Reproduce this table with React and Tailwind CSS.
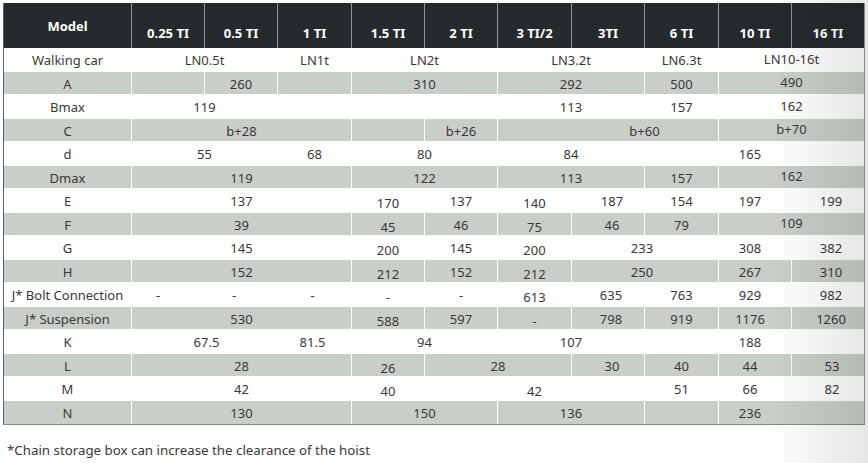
import React from "react";

const heads = ["0.25 TI", "0.5 TI", "1 TI", "1.5 TI", "2 TI", "3 TI/2", "3TI", "6 TI", "10 TI", "16 TI"];

const span = { 1: "col-span-1", 2: "col-span-2", 3: "col-span-3" };

// vertical nudges: default, lower, higher
const LO = "pt-[7px]";
const HI = "pt-0";

// [span, text, extra classes, join (no divider on the left)]
const rows = [
    { label: "Walking car", cells: [[2, "LN0.5t"], [1, "LN1t"], [2, "LN2t"], [2, "LN3.2t"], [1, "LN6.3t"], [2, "LN10-16t", HI]] },
    { label: "A", cells: [[1, ""], [1, "260"], [1, ""], [2, "310"], [2, "292"], [1, "500"], [2, "490", HI]] },
    { label: "Bmax", cells: [[2, "119"], [3, ""], [2, "113"], [1, "157"], [2, "162", HI]] },
    { label: "C", cells: [[3, "b+28"], [1, ""], [1, "b+26"], [1, ""], [2, "b+60", "", true], [2, "b+70", HI]] },
    { label: "d", cells: [[2, "55"], [1, "68"], [2, "80"], [2, "84"], [1, ""], [1, "165", "pr-[10px]"], [1, ""]] },
    { label: "Dmax", cells: [[3, "119"], [2, "122"], [2, "113"], [1, "157"], [2, "162", HI]] },
    { label: "E", cells: [[3, "137"], [1, "170", LO], [1, "137"], [1, "140", LO], [1, "187", "pl-[8px]"], [1, "154"], [1, "197", "pr-[10px]"], [1, "199", "pl-[6px]"]] },
    { label: "F", cells: [[3, "39"], [1, "45", LO], [1, "46"], [1, "75", LO], [1, "46", "pl-[8px]"], [1, "79"], [2, "109", HI]] },
    { label: "G", cells: [[3, "145"], [1, "200", LO], [1, "145"], [1, "200", LO], [2, "233", "pr-[6px]"], [1, "308", "pr-[10px]"], [1, "382", "pl-[6px]"]] },
    { label: "H", cells: [[3, "152"], [1, "212", LO], [1, "152"], [1, "212", LO], [2, "250", "pr-[6px]"], [1, "267", "pr-[10px]"], [1, "310", "pl-[6px]"]] },
    { label: "J* Bolt Connection", cells: [[1, "-", "pr-[20px]"], [1, "-", "pr-[14px]"], [1, "-", "pr-[4px]"], [1, "-", LO], [1, "-"], [1, "613", LO], [1, "635", "pl-[6px]"], [1, "763"], [1, "929", "pr-[10px]"], [1, "982", "pl-[6px]"]] },
    { label: "J* Suspension", cells: [[3, "530"], [1, "588", LO], [1, "597"], [1, "-", LO], [1, "798", "pl-[6px]"], [1, "919"], [1, "1176", "pr-[10px]"], [1, "1260", "pl-[6px]"]] },
    { label: "K", cells: [[2, "67.5", "pl-[4px]"], [1, "81.5", "pr-[4px]"], [2, "94"], [2, "107"], [1, ""], [1, "188", "pr-[10px]"], [1, ""]] },
    { label: "L", cells: [[3, "28"], [1, "26", LO], [2, "28"], [1, "30", "pl-[8px]"], [1, "40"], [1, "44", "pr-[10px]"], [1, "53", "pl-[8px]"]] },
    { label: "M", cells: [[3, "42"], [1, "40", LO], [1, ""], [1, "42", LO], [1, ""], [1, "51"], [1, "66", "pr-[10px]"], [1, "82", "pl-[8px]"]] },
    { label: "N", cells: [[3, "130"], [2, "150"], [2, "136"], [1, ""], [1, "236", "pr-[10px]"], [1, "", "", true]] },
];

const cols = "grid grid-cols-[127px_73px_73px_74px_73px_73px_74px_73px_74px_73px_73px]";

export default function App() {
    return (
        <div className="relative w-[868px] h-[463px] overflow-hidden bg-white font-['Noto_Sans',sans-serif] text-[13px] text-[#383838]">
            <div className="ml-[3px] mt-[3px] w-[862px] border-l border-r border-b border-l-[#5f6366] border-r-[#9a9a9a] border-b-[#8a8a8a]">
                {/* header */}
                <div className={`${cols} h-[45px] bg-[#252a2d] font-bold text-white`}>
                    <div className="flex items-center justify-center pt-[3px]">Model</div>
                    {heads.map((h) => (
                        <div key={h} className="flex items-end justify-center border-l border-[#8d9396] pb-[5px]">
                            {h}
                        </div>
                    ))}
                </div>

                {rows.map((r, i) => (
                    <div
                        key={r.label}
                        className={`${cols} h-[23.5px] ${i < rows.length - 1 ? "border-b border-white" : ""} ${i % 2 ? "bg-[#c9cfc8]" : "bg-white"}`}
                    >
                        <div className="flex items-center justify-center leading-none pt-[3px]">{r.label}</div>
                        {r.cells.map(([n, text, extra = "", join], j) => {
                            const v = extra.includes("pt-") ? "" : "pt-[3px]";
                            return (
                                <div
                                    key={j}
                                    className={`${span[n]} flex items-center justify-center leading-none ${join ? "" : "border-l border-white"} ${v} ${extra}`}
                                >
                                    {text}
                                </div>
                            );
                        })}
                    </div>
                ))}
            </div>

            <p className="mt-[16px] pl-[7px] leading-[18px] text-[13.3px]">*Chain storage box can increase the clearance of the hoist</p>

            {/* light shading over the right edge */}
            <div className="pointer-events-none absolute inset-y-0 right-0 w-[98px] bg-linear-to-r from-transparent to-black/10" />
        </div>
    );
}
